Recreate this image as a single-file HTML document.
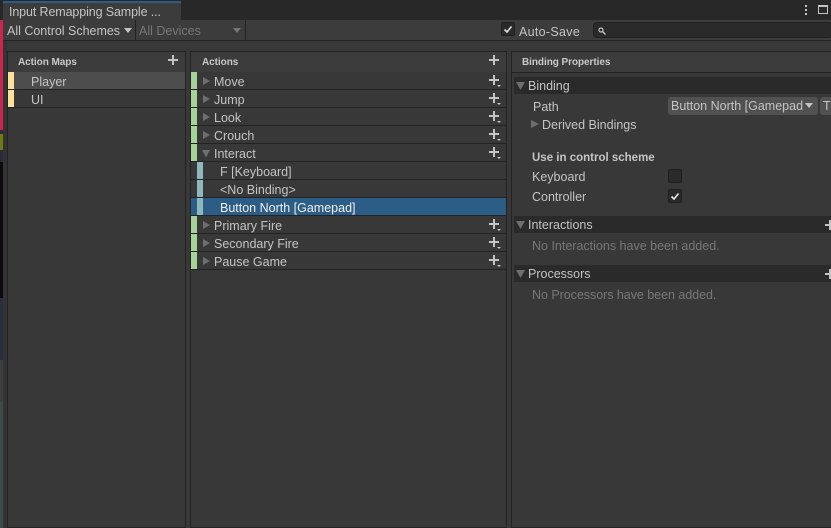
<!DOCTYPE html>
<html><head><meta charset="utf-8">
<style>
html,body{margin:0;padding:0;background:#383838}
#r{position:relative;width:831px;height:528px;overflow:hidden;background:#383838;font-family:"Liberation Sans","DejaVu Sans",sans-serif;font-size:12.5px;color:#c4c4c4}
#r div{position:absolute;box-sizing:border-box}
.t{white-space:nowrap;line-height:18px;height:18px;letter-spacing:0}
.b{font-weight:bold;font-size:10px;color:#c8c8c8;letter-spacing:-.06px}
.row{left:191px;width:315px;height:18px;border-bottom:1px solid #232323;background:#383838}
.g{left:191px;width:6px;height:17px;background:#a6d29a}
.c{left:197px;width:6px;height:17px;background:#8fb8bd}
.y{left:8px;width:6px;height:17px;background:#ffe19a}
.sep{background:#232323}
svg{position:absolute;overflow:visible}
.hd{left:514px;width:317px;height:17px;background:#2a2a2a}
</style></head><body><div id="r">
<!-- left strip -->
<div style="left:0;top:0;width:3px;height:130px;background:#c9264f"></div>
<div style="left:0;top:130px;width:3px;height:4px;background:#2b2b3a"></div>
<div style="left:0;top:134px;width:3px;height:16px;background:#6f7a10"></div>
<div style="left:0;top:150px;width:3px;height:12px;background:#2a2a3c"></div>
<div style="left:0;top:162px;width:3px;height:136px;background:#0c0a0c"></div>
<div style="left:0;top:298px;width:3px;height:62px;background:#2b2d40"></div>
<div style="left:0;top:360px;width:3px;height:42px;background:#3d3d3d"></div>
<div style="left:0;top:402px;width:3px;height:126px;background:#3c4b47"></div>
<div style="left:3px;top:0;width:4px;height:528px;background:#333"></div>
<!-- top bar -->
<div style="left:0;top:0;width:831px;height:20px;background:#282828"></div>
<div style="left:3px;top:1px;width:178px;height:19px;background:#3c3c3c"></div>
<div style="left:3px;top:1px;width:178px;height:2px;background:#2c5d87"></div>
<div class="t" style="left:9px;top:3px;color:#c4c4c4;letter-spacing:-.12px">Input Remapping Sample ...</div>
<div style="left:805px;top:5px;width:2px;height:2px;background:#c4c4c4;box-shadow:0 4px 0 #c4c4c4,0 8px 0 #c4c4c4"></div>
<div style="left:818px;top:5px;width:10px;height:9px;border:1px solid #c4c4c4;border-top-width:2px"></div>
<!-- toolbar -->
<div style="left:3px;top:20px;width:828px;height:21px;background:#3c3c3c;border-bottom:1px solid #232323"></div>
<div class="t" style="left:7px;top:22px;letter-spacing:-.01px">All Control Schemes</div>
<svg style="left:124px;top:28px" width="8" height="5"><path d="M0 0H8L4 5Z" fill="#c4c4c4"/></svg>
<div class="sep" style="left:135px;top:20px;width:1px;height:20px"></div>
<div class="t" style="left:139px;top:22px;color:#777">All Devices</div>
<svg style="left:233px;top:28px" width="8" height="5"><path d="M0 0H8L4 5Z" fill="#777"/></svg>
<div class="sep" style="left:245px;top:20px;width:1px;height:20px"></div>
<div style="left:501px;top:22px;width:14px;height:14px;background:#2a2a2a;border:1px solid #1f1f1f;border-radius:2px"></div>
<svg style="left:501px;top:22px" width="14" height="14"><path d="M3.500 7.500L6 10L10.500 4.500" fill="none" stroke="#e0e0e0" stroke-width="1.6"/></svg>
<div class="t" style="left:519px;top:23px;letter-spacing:.3px">Auto-Save</div>
<div style="left:593px;top:22px;width:240px;height:16px;background:#2a2a2a;border:1px solid #212121;border-radius:4px"></div>
<svg style="left:598px;top:27px" width="8" height="8"><circle cx="3" cy="3" r="2" fill="none" stroke="#c4c4c4" stroke-width="1.2"/><path d="M4.500 4.500L7.500 7.500" stroke="#c4c4c4" stroke-width="1.4"/></svg>
<!-- panels -->
<div style="left:7px;top:51px;width:179px;height:477px;border:1px solid #232323;background:#383838"></div>
<div style="left:190px;top:51px;width:317px;height:477px;border:1px solid #232323;background:#383838"></div>
<div style="left:511px;top:51px;width:321px;height:477px;border:1px solid #232323;background:#383838"></div>
<div style="left:8px;top:52px;width:177px;height:20px;background:#3c3c3c"></div>
<div style="left:191px;top:52px;width:315px;height:20px;background:#3c3c3c"></div>
<div style="left:512px;top:52px;width:319px;height:20px;background:#3c3c3c"></div>
<div class="sep" style="left:512px;top:72px;width:319px;height:1px"></div>
<div class="t b" style="left:18px;top:54px">Action Maps</div>
<div class="t b" style="left:202px;top:54px">Actions</div>
<div class="t b" style="left:522px;top:54px">Binding Properties</div>
<svg style="left:168px;top:55px" width="10" height="10"><path d="M5 0V10M0 5H10" stroke="#c4c4c4" stroke-width="2"/></svg>
<svg style="left:489px;top:55px" width="10" height="10"><path d="M5 0V10M0 5H10" stroke="#c4c4c4" stroke-width="2"/></svg>
<!-- action maps -->
<div style="left:8px;top:72px;width:177px;height:18px;background:#4d4d4d;border-bottom:1px solid #232323"></div>
<div style="left:8px;top:90px;width:177px;height:18px;background:#383838;border-bottom:1px solid #232323"></div>
<div class="y" style="top:72px"></div><div class="y" style="top:90px"></div>
<div class="t" style="left:31px;top:73px">Player</div>
<div class="t" style="left:31px;top:91px">UI</div>
<!-- actions rows -->
<div class="row" style="top:72px"></div><div class="row" style="top:90px"></div><div class="row" style="top:108px"></div><div class="row" style="top:126px"></div><div class="row" style="top:144px"></div><div class="row" style="top:162px"></div><div class="row" style="top:180px"></div>
<div class="row" style="top:198px;background:#2c5d87"></div>
<div class="row" style="top:216px"></div><div class="row" style="top:234px"></div><div class="row" style="top:252px"></div>
<div class="g" style="top:72px"></div><div class="g" style="top:90px"></div><div class="g" style="top:108px"></div><div class="g" style="top:126px"></div><div class="g" style="top:144px"></div>
<div class="g" style="top:162px;background:#383838"></div><div class="g" style="top:180px;background:#383838"></div>
<div class="c" style="top:162px"></div><div class="c" style="top:180px"></div><div class="c" style="top:198px"></div>
<div class="g" style="top:216px"></div><div class="g" style="top:234px"></div><div class="g" style="top:252px"></div>
<svg style="left:0;top:0" width="831" height="528">
<g stroke="#c4c4c4" stroke-width="2" fill="none">
<path d="M494 75V85M489 80H499"/><path d="M494 93V103M489 98H499"/><path d="M494 111V121M489 116H499"/><path d="M494 129V139M489 134H499"/><path d="M494 147V157M489 152H499"/>
<path d="M494 219V229M489 224H499"/><path d="M494 237V247M489 242H499"/><path d="M494 255V265M489 260H499"/>
</g>
<g fill="#c4c4c4">
<path d="M497 85H501L499 87Z"/><path d="M497 103H501L499 105Z"/><path d="M497 121H501L499 123Z"/><path d="M497 139H501L499 141Z"/><path d="M497 157H501L499 159Z"/>
<path d="M497 229H501L499 231Z"/><path d="M497 247H501L499 249Z"/><path d="M497 265H501L499 267Z"/>
</g>
</svg>
<div class="t" style="left:214px;top:73px">Move</div>
<div class="t" style="left:214px;top:91px">Jump</div>
<div class="t" style="left:214px;top:109px">Look</div>
<div class="t" style="left:214px;top:127px">Crouch</div>
<div class="t" style="left:214px;top:145px">Interact</div>
<div class="t" style="left:220px;top:163px">F [Keyboard]</div>
<div class="t" style="left:220px;top:181px">&lt;No Binding&gt;</div>
<div class="t" style="left:220px;top:199px;color:#f0f0f0">Button North [Gamepad]</div>
<div class="t" style="left:214px;top:217px">Primary Fire</div>
<div class="t" style="left:214px;top:235px">Secondary Fire</div>
<div class="t" style="left:214px;top:253px">Pause Game</div>
<!-- binding props -->
<div class="hd" style="top:77px"></div>
<div class="t" style="left:528px;top:77px">Binding</div>
<div class="t" style="left:533px;top:98px">Path</div>
<div style="left:668px;top:97px;width:150px;height:18px;background:#515151;border-radius:3px"></div>
<div class="t" style="left:671px;top:97px">Button North [Gamepad</div>
<svg style="left:805px;top:103px" width="8" height="5"><path d="M0 0H8L4 5Z" fill="#c4c4c4"/></svg>
<div style="left:820px;top:97px;width:14px;height:18px;background:#515151;border-radius:3px"></div>
<div class="t" style="left:823px;top:97px">T</div>
<div class="t" style="left:542px;top:116px">Derived Bindings</div>
<div class="t" style="left:532px;top:149px;font-weight:bold;font-size:11.5px">Use in control scheme</div>
<div class="t" style="left:532px;top:168px">Keyboard</div>
<div style="left:668px;top:169px;width:14px;height:14px;background:#2a2a2a;border:1px solid #1f1f1f;border-radius:2px"></div>
<div class="t" style="left:532px;top:188px">Controller</div>
<div style="left:668px;top:189px;width:14px;height:14px;background:#2a2a2a;border:1px solid #1f1f1f;border-radius:2px"></div>
<svg style="left:668px;top:189px" width="14" height="14"><path d="M3.500 7.500L6 10L10.500 4.500" fill="none" stroke="#e8e8e8" stroke-width="1.6"/></svg>
<div class="hd" style="top:216px"></div>
<div class="t" style="left:528px;top:216px">Interactions</div>
<div style="left:825px;top:224px;width:6px;height:2px;background:#c4c4c4"></div>
<div style="left:829px;top:220px;width:2px;height:10px;background:#c4c4c4"></div>
<div class="t" style="left:532px;top:237px;color:#777">No Interactions have been added.</div>
<div class="hd" style="top:265px"></div>
<div class="t" style="left:528px;top:265px">Processors</div>
<div style="left:825px;top:273px;width:6px;height:2px;background:#c4c4c4"></div>
<div style="left:829px;top:269px;width:2px;height:10px;background:#c4c4c4"></div>
<div class="t" style="left:532px;top:286px;color:#777;letter-spacing:-.04px">No Processors have been added.</div>
<!-- triangles (on top of header bars) -->
<svg style="left:0;top:0" width="831" height="528" fill="#6e6e6e">
<path d="M203 77V85L210 81Z"/><path d="M203 95V103L210 99Z"/><path d="M203 113V121L210 117Z"/><path d="M203 131V139L210 135Z"/>
<path d="M202 150H210L206 157.500Z"/>
<path d="M203 221V229L210 225Z"/><path d="M203 239V247L210 243Z"/><path d="M203 257V265L210 261Z"/>
<path d="M531 120V128L539 124Z"/>
<path d="M516 82H525L520.500 90Z"/><path d="M516 221H525L520.500 229Z"/><path d="M516 270H525L520.500 278Z"/>
</svg>
</div></body></html>
